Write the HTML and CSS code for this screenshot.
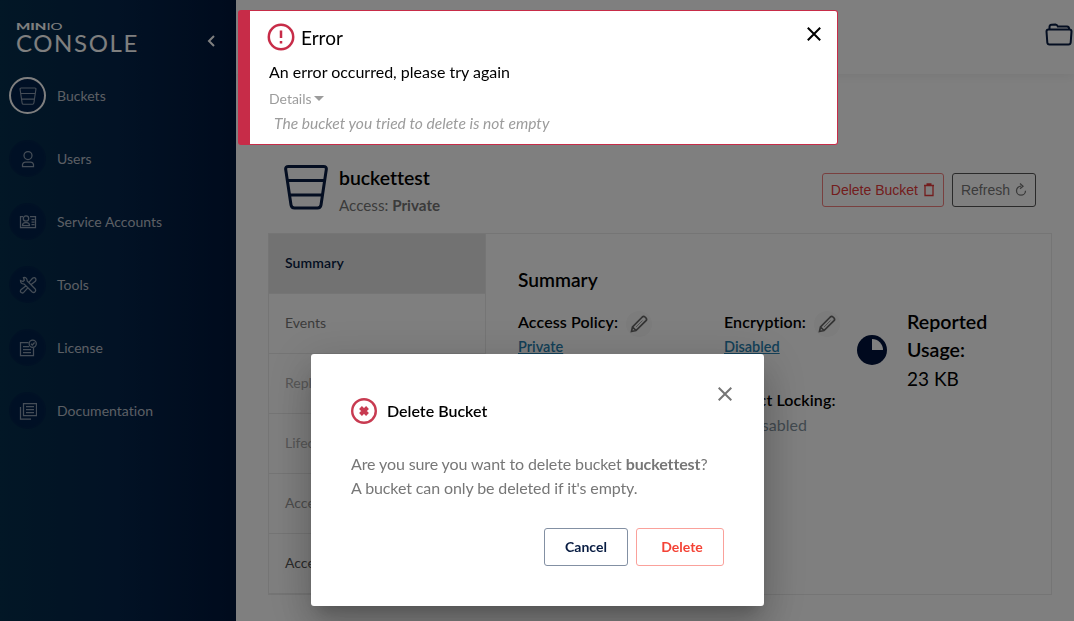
FILE: index.html
```
<!DOCTYPE html>
<html lang="en">
<head>
  <meta charset="UTF-8" />
  <title>MinIO Console</title>
  <link rel="stylesheet" href="styles.css">
</head>
<body>
  <svg class="defs" width="0" height="0">
    <symbol id="bucket" viewBox="0 0 44 46">
      <path d="M4.500 2.500h35q3.300 0 2.800 3l-5.300 35.500q-.5 3-3.500 3h-23q-3 0-3.500-3L1.700 5.500q-.5-3 2.800-3zM4 16.500h36M6 31h32" />
    </symbol>
    <symbol id="pencil" viewBox="0 0 18 18">
      <path d="M1.500 16.500l1-4.500L12.300 2q1.400-1.200 2.700 0l1 1q1.200 1.400 0 2.700L6 15.500zM2.500 12l3.500 3.500" />
      <path class="thin" d="M6 12l6.500-6.500" />
    </symbol>
  </svg>

  <div class="layout">
    <nav class="sidebar">
      <div class="brand">
        <div class="logo">
          <div class="logo-top"><b>MIN</b><span>IO</span></div>
          <div class="logo-main">CONSOLE</div>
        </div>
        <svg class="collapse" width="10" height="14" viewBox="0 0 10 14"><path d="M8 2L3 7l5 5" /></svg>
      </div>
      <a class="nav-item active">
        <span class="nav-icon"><svg width="18" height="18"><use href="#bucket" class="thick" /></svg></span>Buckets
      </a>
      <a class="nav-item">
        <span class="nav-icon"><svg width="18" height="18" viewBox="0 0 18 18"><circle cx="9" cy="5.500" r="4" /><path d="M3.500 16.500v-2q.5-2.500 3-2.500h5q2.500 0 3 2.500v2z" /></svg></span>Users
      </a>
      <a class="nav-item">
        <span class="nav-icon"><svg width="18" height="18" viewBox="0 0 18 18"><path d="M4 3.500H1.500v11h15v-11H11M12.500 6.500h3M12.500 9h3M12.500 11.500h3M3.500 12.500q0-3 3-3h1q3 0 3 3z" /><circle cx="7" cy="5.500" r="2.700" /></svg></span>Service Accounts
      </a>
      <a class="nav-item">
        <span class="nav-icon"><svg width="18" height="18" viewBox="0 0 18 18"><path d="M1.500 4.500L4 5.500l1.300-1.300L4.500 1.500Q8 1 8.200 5l8 8q1 1.500-.2 2.800t-2.800.2l-8-8Q1.300 8 1.500 4.500zM9.500 6.800l4-4.500q2-1.500 3 0t-.2 3L11.500 9M7 9.700l-5 4q-1.200 1.500 0 2.700t2.700 0L9 11.700" /></svg></span>Tools
      </a>
      <a class="nav-item">
        <span class="nav-icon"><svg width="18" height="18" viewBox="0 0 18 18"><path d="M9.500 3.500h-8v13h13V9M4 7.500h6M4 10.500h8M4 13.500h8M12 4.800l1.300 1.200 2.300-2.500" /><circle cx="13.700" cy="4.700" r="3.600" /></svg></span>License
      </a>
      <a class="nav-item">
        <span class="nav-icon"><svg width="18" height="18" viewBox="0 0 18 18"><path d="M4.500 1.500h13v12h-13zM7 4.500h8M7 7.500h8M7 10.500h8M1.500 5v12H12" /></svg></span>Documentation
      </a>
    </nav>

    <main>
      <header class="page-header">
        <svg width="28" height="24" viewBox="0 0 28 24"><path d="M4.500 6.500V4q0-2 2-2.200l4-.3q1.500 0 2.300 2h9.200q2.200 0 2.200 3" /><path d="M3.500 6.500h21q2 0 2 2l-.8 11q-.2 2-2.200 2h-19q-2 0-2.200-2l-.8-11q0-2 2-2z" /></svg>
      </header>

      <div class="content">
        <div class="title-row">
          <svg class="title-icon" width="44" height="46"><use href="#bucket" /></svg>
          <div class="title-text">
            <h1>buckettest</h1>
            <div class="access">Access: <b>Private</b></div>
          </div>
          <div class="actions">
            <button class="btn-danger">Delete Bucket
              <svg width="12" height="14" viewBox="0 0 12 14"><path d="M1 2.500h10M2 2.500v10h8v-10M3.500 1h5" /></svg>
            </button>
            <button>Refresh
              <svg width="12" height="14" viewBox="0 0 12 14"><path d="M6 3.200a4.500 4.500 0 1 0 4.500 4.500M5 .5l3 2.700-3 2.600" /></svg>
            </button>
          </div>
        </div>

        <div class="panel">
          <div class="tabs">
            <div class="tab selected">Summary</div>
            <div class="tab">Events</div>
            <div class="tab disabled">Replication</div>
            <div class="tab disabled">Lifecycle</div>
            <div class="tab muted">Access Audit</div>
            <div class="tab dark">Access Rules</div>
          </div>
          <div class="summary">
            <h2>Summary</h2>
            <div class="summary-grid">
              <div class="field">
                <div class="label">Access Policy: <span class="edit"><svg width="18" height="18"><use href="#pencil" /></svg></span></div>
                <a>Private</a>
              </div>
              <div class="field">
                <div class="label">Encryption: <span class="edit"><svg width="18" height="18"><use href="#pencil" /></svg></span></div>
                <a>Disabled</a>
              </div>
              <div class="field">
                <div class="label">Replication:</div>
                <div class="value">Disabled</div>
              </div>
              <div class="field">
                <div class="label">Object Locking:</div>
                <div class="value">Disabled</div>
              </div>
              <div class="usage">
                <svg width="30" height="30" viewBox="0 0 30 30"><circle cx="15" cy="15" r="15" /><path d="M15 4v11h11A11 11 0 0 0 15 4z" /></svg>
                <div>
                  <div class="usage-title">Reported Usage:</div>
                  <div class="usage-value">23 KB</div>
                </div>
              </div>
            </div>
          </div>
        </div>
      </div>
    </main>
  </div>

  <div class="backdrop"></div>

  <div class="modal">
    <svg class="modal-close" width="14" height="14" viewBox="0 0 14 14"><path d="M.7.7l12.600 12.600M13.300.7L.7 13.300" /></svg>
    <div class="modal-title">
      <svg width="26" height="26" viewBox="0 0 26 26"><circle cx="13" cy="13" r="11.800" /><path d="M9.500 9.500l7 7M16.500 9.500l-7 7" /></svg>
      <span>Delete Bucket</span>
    </div>
    <p>Are you sure you want to delete bucket <b>buckettest</b>?<br>A bucket can only be deleted if it's empty.</p>
    <div class="modal-actions">
      <button class="cancel">Cancel</button>
      <button class="delete">Delete</button>
    </div>
  </div>

  <div class="snackbar">
    <svg class="snack-close" width="14" height="14" viewBox="0 0 14 14"><path d="M.8.8l12.400 12.400M13.200.8L.8 13.200" /></svg>
    <div class="snack-title">
      <svg width="28" height="28" viewBox="0 0 28 28"><circle cx="14" cy="14" r="12.200" /><path d="M14 7.500v7.500M14 18v2.500" /></svg>
      Error
    </div>
    <div class="snack-message">An error occurred, please try again</div>
    <div class="snack-details">Details<span class="caret"></span></div>
    <div class="snack-error">The bucket you tried to delete is not empty</div>
  </div>
</body>
</html>
```
FILE: styles.css
```
:root {
  --navy: #081c42;
  --red: #c83b51;
  --error: #c72c48;
  --border: #eaeaea;
}

* {
  box-sizing: border-box;
}

html, body {
  margin: 0;
  height: 100%;
  overflow: hidden;
  background: #fff;
  color: #000;
  font-family: Lato, sans-serif;
  font-variant-ligatures: none;
}

svg {
  fill: none;
  stroke: currentColor;
  flex: none;
}

.defs {
  position: absolute;
}

.layout {
  display: flex;
  height: 621px;
}

/* sidebar */
.sidebar {
  width: 236px;
  flex: none;
  padding: 21px 9px;
  background: linear-gradient(90deg, #042e4c 0%, #04244a 50%, #00163a 100%);
}

.brand {
  display: flex;
  justify-content: space-between;
  height: 56px;
  padding: 0 11px 0 7px;
  color: #fff;
}

.logo-top {
  display: flex;
  height: 11px;
  font-size: 10px;
  line-height: 11px;
  transform: scaleX(1.5);
  transform-origin: left;
}

.logo-top b {
  font-weight: 900;
}

.logo-main {
  font-size: 24px;
  line-height: 22px;
  letter-spacing: 1.6px;
}

.collapse {
  margin-top: 13px;
  stroke-width: 2;
}

.nav-item {
  display: flex;
  align-items: center;
  gap: 11px;
  height: 37px;
  margin-bottom: 26px;
  font-size: 14px;
  letter-spacing: .03px;
  color: #b8bec8;
}

.nav-icon {
  display: flex;
  align-items: center;
  justify-content: center;
  width: 37px;
  height: 37px;
  border: 2px solid #02234a;
  border-radius: 50%;
  background: #00214a;
  color: #8b9bae;
}

.nav-icon svg {
  stroke-width: 1.250;
}

.active .nav-icon {
  border-color: #fff;
}

.thick {
  stroke-width: 2.800;
}

/* page */
main {
  flex: 1;
  min-width: 0;
}

.page-header {
  display: flex;
  justify-content: flex-end;
  height: 74px;
  padding: 23px 1px 0 0;
  color: var(--navy);
  box-shadow: 0 3px 10px rgba(0, 0, 0, .06);
}

.page-header svg {
  stroke-width: 2;
}

.content {
  padding: 90px 22px 0 32px;
}

.title-row {
  display: flex;
  height: 69px;
  padding: 0 16px;
}

.title-icon {
  color: var(--navy);
  stroke-width: 3;
}

.title-text {
  margin-left: 11px;
}

h1 {
  margin: 0;
  font-size: 19.400px;
  font-weight: 600;
  line-height: 28px;
}

.access {
  font-size: 15.200px;
  line-height: 27px;
  color: #777;
}

.actions {
  display: flex;
  gap: 8px;
  margin: 9px 0 0 auto;
}

.actions button {
  display: flex;
  align-items: center;
  gap: 5px;
  height: 34px;
  padding: 0 8px;
  border: 1px solid #555;
  border-radius: 3px;
  background: none;
  font: 14px "Liberation Sans", Arial, sans-serif;
  color: #777;
}

.actions svg {
  stroke-width: 1.300;
}

.actions .btn-danger {
  border-color: #f3807f;
  color: #e63a3a;
}

.panel {
  display: flex;
  height: 362px;
  border: 1px solid var(--border);
}

.tabs {
  width: 217px;
  border-right: 1px solid var(--border);
}

.tab {
  height: 60px;
  padding-left: 16px;
  border-bottom: 1px solid var(--border);
  font-size: 14px;
  line-height: 58px;
  color: #777;
}

.tab.selected {
  background: #e5e5e5;
  font-weight: 600;
  letter-spacing: .1px;
  color: var(--navy);
}

.tab.disabled {
  color: #adadad;
}

.tab.muted {
  color: #999;
}

.tab.dark {
  color: #555;
}

.summary {
  flex: 1;
  padding: 32px;
}

h2 {
  margin: 0 0 16px;
  font-size: 19.200px;
  font-weight: 600;
  line-height: 28px;
}

.summary-grid {
  display: grid;
  grid-template-columns: 206px 133px 1fr;
  grid-template-rows: 78px 1fr;
}

.label {
  display: flex;
  align-items: center;
  gap: 8px;
  height: 26px;
  font-size: 16px;
  font-weight: 600;
  line-height: 24px;
  letter-spacing: .1px;
  white-space: nowrap;
  padding-bottom: 2px;
}

.edit {
  display: flex;
  align-items: center;
  justify-content: center;
  width: 26px;
  height: 26px;
  margin: 2px 0 -2px;
  border-radius: 50%;
  background: #f8f8f8;
  color: #666;
}

.edit svg {
  stroke-width: 1.700;
}

.thin {
  stroke-width: .6;
}

.field a {
  display: block;
  font-size: 14.500px;
  font-weight: 600;
  line-height: 22px;
  text-decoration: underline;
  color: #2781b0;
}

.value {
  font-size: 16px;
  line-height: 22px;
  padding-left: 22px;
  color: #8494a0;
}

.usage {
  display: flex;
  gap: 20px;
  grid-column: 3;
  grid-row: 1 / 3;
  margin-top: -2px;
}

.usage svg {
  margin-top: 27px;
  stroke: none;
}

.usage circle {
  fill: #00123c;
}

.usage path {
  fill: #fff;
}

.usage-title {
  width: 100px;
  font-size: 19.600px;
  font-weight: 600;
  line-height: 28px;
}

.usage-value {
  font-size: 19px;
  line-height: 30px;
}

/* overlays */
.backdrop {
  position: fixed;
  inset: 0;
  background: rgba(0, 0, 0, .5);
}

.modal {
  position: fixed;
  top: 354px;
  left: 311px;
  width: 453px;
  height: 252px;
  padding: 44px 40px 40px;
  border-radius: 3px;
  background: #fff;
  box-shadow: 0 11px 15px -7px rgba(0, 0, 0, .2), 0 24px 38px 3px rgba(0, 0, 0, .14), 0 9px 46px 8px rgba(0, 0, 0, .12);
}

.modal-close {
  position: absolute;
  top: 33px;
  right: 32px;
  color: #757575;
  stroke-width: 2;
}

.modal-title {
  display: flex;
  align-items: center;
  gap: 10px;
  height: 26px;
  font-size: 16px;
  font-weight: 600;
}

.modal-title span {
  padding-bottom: 2px;
}

.modal-title svg {
  color: var(--red);
  stroke-width: 2.400;
}

.modal-title path {
  stroke-width: 4;
}

.modal p {
  margin: 28px 0;
  font-size: 16px;
  line-height: 24px;
  letter-spacing: -.11px;
  color: #777;
}

.modal-actions {
  display: flex;
  justify-content: flex-end;
  gap: 8px;
}

.modal-actions button {
  height: 38px;
  padding-bottom: 3px;
  border: 1px solid #8390a3;
  border-radius: 3px;
  background: #fff;
  font: 700 14px Lato, sans-serif;
  color: var(--navy);
}

.modal-actions .cancel {
  width: 84px;
}

.modal-actions .delete {
  width: 88px;
  padding-left: 10px;
  border-color: #faa19b;
  color: #f44336;
}

.snackbar {
  position: fixed;
  top: 10px;
  left: 238px;
  width: 600px;
  height: 135px;
  padding: 12px 16px 0 19px;
  border: 1px solid var(--error);
  border-left-width: 12px;
  border-radius: 3px;
  background: #fff;
}

.snack-close {
  position: absolute;
  top: 16px;
  right: 16px;
  stroke-width: 2;
}

.snack-title {
  display: flex;
  align-items: center;
  gap: 6px;
  height: 28px;
  margin-left: -2px;
  font-size: 19px;
}

.snack-title svg {
  color: var(--error);
  stroke-width: 2.500;
}

.snack-message {
  margin-top: 7px;
  font-size: 16px;
  line-height: 28px;
}

.snack-details {
  display: flex;
  align-items: center;
  gap: 2px;
  font-size: 14px;
  line-height: 25px;
  color: #9c9c9c;
}

.caret {
  border: 5px solid transparent;
  border-top-color: #9c9c9c;
  border-bottom: 0;
}

.snack-error {
  padding-left: 5px;
  font-size: 15.600px;
  font-style: italic;
  line-height: 24px;
  color: #9c9c9c;
}
```
